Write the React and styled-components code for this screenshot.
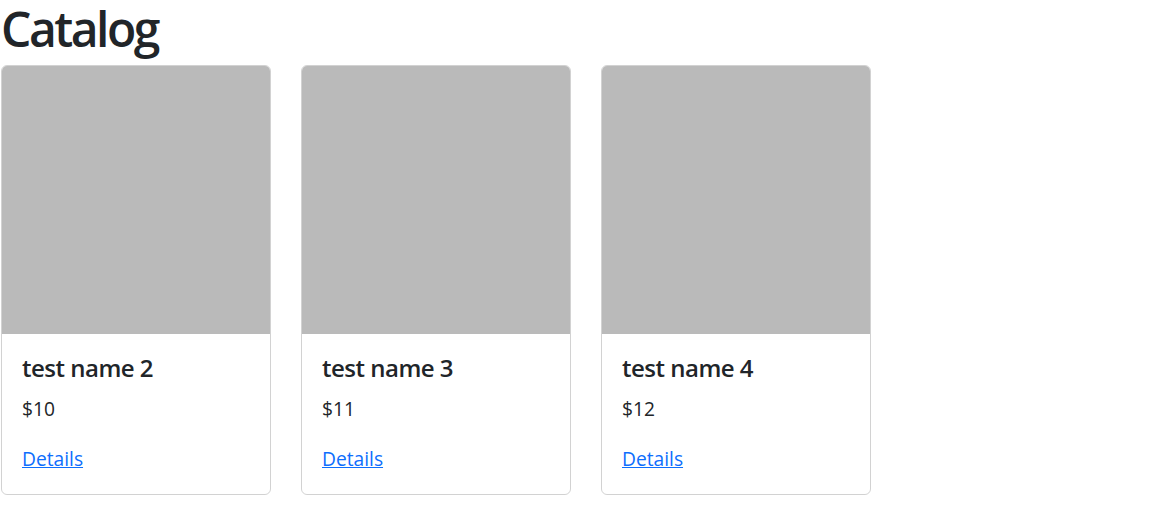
import React from 'react'
import styled, { createGlobalStyle } from 'styled-components'

const GlobalStyle = createGlobalStyle`
  body {
    margin: 0;
    font-family: "Open Sans", "Noto Sans", sans-serif;
    font-size: 19.2px;
    line-height: 1.5;
    color: #212529;
    background: #fff;
  }
`

const products = [
  { id: 2, name: 'test name 2', price: 10 },
  { id: 3, name: 'test name 3', price: 11 },
  { id: 4, name: 'test name 4', price: 12 },
]

const App = () => {
  return (
    <Page>
      <GlobalStyle />
      <Heading>Catalog</Heading>
      <Grid>
        {products.map(p => (
          <Card key={p.id}>
            <Thumb />
            <CardBody>
              <CardTitle>{p.name}</CardTitle>
              <Price>${p.price}</Price>
              <DetailsLink href="#">Details</DetailsLink>
            </CardBody>
          </Card>
        ))}
      </Grid>
    </Page>
  )
}

export default App

const Page = styled.div`
  padding: 0 1px;
`

const Heading = styled.h1`
  margin: 0 0 7.4px;
  font-size: 48px;
  font-weight: 600;
  line-height: 1.2;
  letter-spacing: -2.5px;
`

const Grid = styled.div`
  display: flex;
  gap: 30px;
`

const Card = styled.div`
  width: 270px;
  border: 1px solid rgba(0, 0, 0, 0.175);
  border-radius: 6px;
  overflow: hidden;
  box-sizing: border-box;
`

const Thumb = styled.div`
  height: 268px;
  background: #bababa;
`

const CardBody = styled.div`
  padding: 20px;
`

const CardTitle = styled.h5`
  margin: 0 0 12.4px;
  font-size: 24px;
  font-weight: 600;
  line-height: 1.2;
  letter-spacing: -0.5px;
`

const Price = styled.p`
  margin: 0 0 21px;
`

const DetailsLink = styled.a`
  display: inline-block;
  color: #0d6efd;
  text-decoration: underline;
`
